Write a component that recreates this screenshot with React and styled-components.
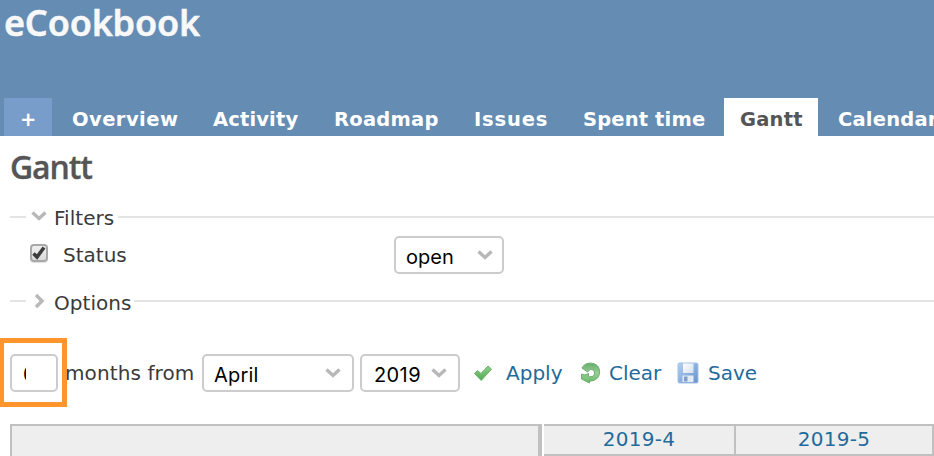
import React from 'react'
import styled, { createGlobalStyle } from 'styled-components'

const GlobalStyle = createGlobalStyle`
  * {
    box-sizing: border-box;
  }

  body {
    margin: 0;
    background: #fff;
    overflow: hidden;
  }
`

const Page = styled.div`
  width: 934px;
  height: 456px;
  overflow: hidden;
  background: #fff;
  color: #3a3a3a;
  font-family: Verdana, 'DejaVu Sans', sans-serif;
  font-size: 20px;
  line-height: 24px;
  white-space: nowrap;
`

const Header = styled.header`
  display: flex;
  flex-direction: column;
  justify-content: space-between;
  height: 136px;
  padding-left: 4px;
  background: #658cb3;
`

const ProjectName = styled.h1`
  margin: 0;
  color: #f8f8f8;
  font-family: 'Noto Sans', sans-serif;
  font-size: 36px;
  font-weight: 600;
  line-height: 46px;
  letter-spacing: -0.2px;
  -webkit-text-stroke: 0.5px #f8f8f8;
`

const Tabs = styled.nav`
  display: flex;
  gap: 4px;
`

const Tab = styled.a`
  flex: none;
  width: ${({ $width }) => $width}px;
  height: 38px;
  padding: 10px 0 0 16px;
  background: ${({ $bg }) => $bg || 'transparent'};
  color: ${({ $active }) => ($active ? '#555' : '#fff')};
  font-size: 19.5px;
  font-weight: bold;
  letter-spacing: ${({ $spacing }) => $spacing || 0}px;
`

const Content = styled.main`
  display: flex;
  flex-direction: column;
  padding-left: 10px;
`

const Title = styled.h2`
  height: 68px;
  margin: 0;
  padding-top: 11px;
  color: #555;
  font-family: 'Open Sans', sans-serif;
  font-size: 32px;
  font-weight: 600;
  line-height: 40px;
  letter-spacing: -1.1px;
  -webkit-text-stroke: 0.3px #555;
`

const Legend = styled.div`
  display: flex;
  align-items: center;
  height: 26px;

  &::before {
    content: '';
    width: 16px;
    height: 2px;
    margin-right: 4px;
    background: #e4e4e4;
  }

  &::after {
    content: '';
    flex: 1;
    height: 2px;
    margin-left: 3px;
    background: #e4e4e4;
  }
`

const LegendText = styled.span`
  width: ${({ $width }) => $width}px;
  margin-left: 6px;
  padding-top: ${({ $drop }) => $drop || 0}px;
  letter-spacing: 0.05px;
`

const FilterRow = styled.div`
  display: flex;
  align-items: center;
  height: 58px;
  padding: 0 0 8px 20px;
`

const Checkbox = styled.span`
  display: flex;
  align-items: center;
  justify-content: center;
  width: 18px;
  height: 18px;
  margin-top: -4px;
  border: 2px solid #a8a8a8;
  border-radius: 4px;
  background: linear-gradient(#f0f0f0, #dadada);
  box-shadow: 0 1px 1px #ddd;
`

const FilterName = styled.span`
  width: 331px;
  margin-left: 15px;
`

const Select = styled.div`
  display: flex;
  flex: none;
  align-items: center;
  justify-content: space-between;
  width: ${({ $width }) => $width}px;
  height: 38px;
  margin-left: ${({ $offset }) => $offset || 0}px;
  padding: 4px ${({ $end }) => $end || 10}px 0 ${({ $start }) => $start || 10}px;
  border: 2px solid #ccc;
  border-radius: 5px;
  color: #000;
  font-family: Inter, sans-serif;
  font-size: 20px;
  letter-spacing: ${({ $spacing }) => $spacing || 0}px;

  svg {
    margin-top: -2px;
  }
`

const Controls = styled.div`
  display: flex;
  align-items: center;
  height: 38px;
  margin-top: 40px;
`

const MonthsInput = styled.div`
  position: relative;
  flex: none;
  width: 48px;
  height: 38px;
  padding: 6px 0 0 11px;
  border: 2px solid #ccc;
  border-radius: 5px;
  color: #000;
  font-family: Inter, sans-serif;
  font-size: 20px;
`

const Highlight = styled.div`
  position: absolute;
  top: -18px;
  left: -13px;
  width: 68px;
  height: 69px;
  border: 5px solid #ff962d;
`

// the field is too narrow for its value, only the left edge is visible
const ClippedValue = styled.span`
  display: block;
  width: 3px;
  overflow: hidden;
`

const MonthsLabel = styled.span`
  width: 137px;
  margin-left: 7px;
  letter-spacing: 0.1px;
`

const Actions = styled.div`
  display: flex;
  margin-left: 13px;
`

const Action = styled.a`
  display: flex;
  align-items: center;
  width: ${({ $width }) => $width}px;
  color: #1f6b9c;

  svg {
    flex: none;
    margin-right: ${({ $gap }) => $gap}px;
  }
`

const Chart = styled.div`
  display: flex;
  height: 32px;
  margin-top: 32px;
`

const Subjects = styled.div`
  flex: none;
  width: 532px;
  margin-right: 2px;
  border: 2px solid #c0c0c0;
  border-right-width: 4px;
  border-bottom: 0;
  background: #eee;
`

const Month = styled.div`
  flex: none;
  width: ${({ $width }) => $width}px;
  border: solid #c0c0c0;
  border-width: 2px 2px 2px 0;
  background: #eee;
  color: #1f6b9c;
  line-height: 27px;
  letter-spacing: 0.25px;
  text-align: center;
`

const tabs = [
  { label: '+', width: 48, bg: '#799dcb' },
  { label: 'Overview', width: 137, spacing: 0.45 },
  { label: 'Activity', width: 117, spacing: 0.15 },
  { label: 'Roadmap', width: 136, spacing: 0.25 },
  { label: 'Issues', width: 105, spacing: 0.85 },
  { label: 'Spent time', width: 153, spacing: 0.15 },
  { label: 'Gantt', width: 94, bg: '#fff', active: true, spacing: 0.2 },
  { label: 'Calendar', width: 136, spacing: 0.2 },
]

const Chevron = ({ right }) => (
  <svg width="18" height="16" viewBox="0 0 18 16" fill="none" stroke="#b8b8b8" strokeWidth="3.4">
    <path d={right ? 'M6 2l6 6-6 6' : 'M2.5 3.5l6.5 6 6.5-6'} />
  </svg>
)

const CheckIcon = () => (
  <svg width="20" height="18" viewBox="0 0 20 18">
    <defs>
      <linearGradient id="check" x1="0" y1="0" x2="0" y2="1">
        <stop offset="0" stopColor="#8fcf8b" />
        <stop offset="1" stopColor="#55a854" />
      </linearGradient>
    </defs>
    <path d="M1.5 9.5l3-3L8 9.500l7-7.500 3.500 3.200L8.200 16.500z" fill="url(#check)" stroke="#6bb36a" strokeLinejoin="round" />
  </svg>
)

const ReloadIcon = () => (
  <svg width="22" height="22" viewBox="0 0 22 22">
    <defs>
      <linearGradient id="reload" x1="0" y1="0" x2="0" y2="1">
        <stop offset="0" stopColor="#64ad6d" />
        <stop offset=".5" stopColor="#98cd94" />
        <stop offset="1" stopColor="#6ab869" />
      </linearGradient>
    </defs>
    <path
      d="M2 6C4 1.500 9 .5 13 1.500c5 1.200 7 5 6.500 9.500-.5 5-4 7.500-8.500 8H9.500v2L1.500 17v-5L5 13l3.500-1.500v3c3.500.8 6-.5 6-3.500 0-2.500-2-4-4.500-3.500L7.500 10z"
      fill="url(#reload)"
      stroke="#6bae70"
      strokeLinejoin="round"
    />
  </svg>
)

const SaveIcon = () => (
  <svg width="22" height="22" viewBox="0 0 22 22">
    <defs>
      <linearGradient id="disk" x1="0" y1="0" x2="1" y2="1">
        <stop offset="0" stopColor="#b4d0f2" />
        <stop offset="1" stopColor="#6591cc" />
      </linearGradient>
      <linearGradient id="label" x1="0" y1="0" x2="1" y2="1">
        <stop offset="0" stopColor="#fff" />
        <stop offset="1" stopColor="#d4e0ef" />
      </linearGradient>
    </defs>
    <rect x="1" y="1" width="20" height="20" rx="1.5" fill="url(#disk)" stroke="#a3c0e6" />
    <rect x="6" y="1.5" width="10.5" height="9.5" fill="url(#label)" />
    <rect x="5.5" y="13.5" width="11" height="6.5" fill="#e3ebf5" />
    <rect x="7" y="14.5" width="3.5" height="5" fill="#7c9fcc" />
  </svg>
)

const App = () => (
  <Page>
    <GlobalStyle />
    <Header>
      <ProjectName>eCookbook</ProjectName>
      <Tabs>
        {tabs.map(({ label, width, bg, active, spacing }) => (
          <Tab key={label} $width={width} $bg={bg} $active={active} $spacing={spacing}>
            {label}
          </Tab>
        ))}
      </Tabs>
    </Header>
    <Content>
      <Title>Gantt</Title>
      <Legend>
        <Chevron />
        <LegendText $width={61} $drop={1}>Filters</LegendText>
      </Legend>
      <FilterRow>
        <Checkbox>
          <svg width="14" height="14" viewBox="0 0 14 14" fill="none" stroke="#3c3c3c" strokeWidth="3.6">
            <path d="M1.5 7.5L5 11l7-9.5" />
          </svg>
        </Checkbox>
        <FilterName>Status</FilterName>
        <Select $width={110} $end={8}>
          open
          <Chevron />
        </Select>
      </FilterRow>
      <Legend>
        <Chevron right />
        <LegendText $width={77} $drop={4}>Options</LegendText>
      </Legend>
      <Controls>
        <MonthsInput>
          <ClippedValue>6</ClippedValue>
          <Highlight />
        </MonthsInput>
        <MonthsLabel>months from</MonthsLabel>
        <Select $width={152} $spacing={0.2}>
          April
          <Chevron />
        </Select>
        <Select $width={100} $offset={6} $start={12} $spacing={0.4}>
          2019
          <Chevron />
        </Select>
        <Actions>
          <Action $width={107} $gap={13}>
            <CheckIcon />
            Apply
          </Action>
          <Action $width={97} $gap={7}>
            <ReloadIcon />
            Clear
          </Action>
          <Action $width={90} $gap={9}>
            <SaveIcon />
            Save
          </Action>
        </Actions>
      </Controls>
      <Chart>
        <Subjects />
        <Month $width={192}>2019-4</Month>
        <Month $width={198}>2019-5</Month>
      </Chart>
    </Content>
  </Page>
)

export default App
